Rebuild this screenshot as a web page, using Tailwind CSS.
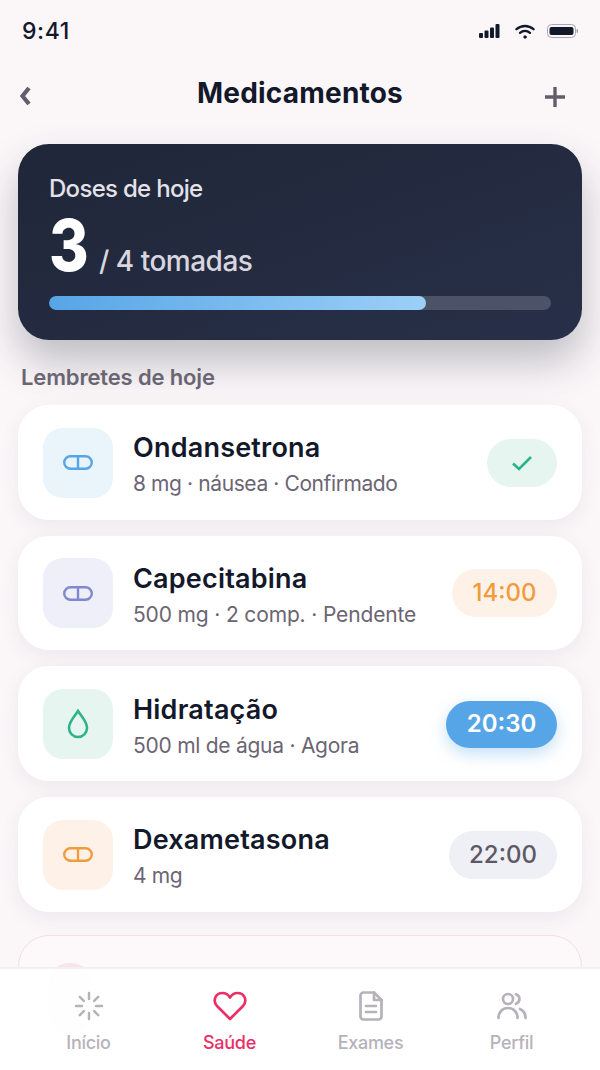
<!DOCTYPE html>
<html lang="en">
<head>
<meta charset="UTF-8">
<title>Medicamentos</title>
<script src="https://cdn.jsdelivr.net/npm/@tailwindcss/browser@4"></script>
</head>
<body class="bg-[#fbf7f9] font-['Inter',sans-serif]">
<div class="relative h-[1070px] w-[600px] overflow-hidden">
  <!-- Status bar -->
  <div class="flex h-[62px] items-center justify-between px-[22px]">
    <span class="text-[23px] font-medium leading-none text-[#14182b] tracking-[0.6px]">9:41</span>
    <div class="flex items-center">
      <svg width="21" height="14" viewBox="0 0 21 14" fill="#14182b"><rect x="0" y="9" width="4" height="5" rx="1"/><rect x="5.5" y="6.5" width="4" height="7.5" rx="1"/><rect x="11" y="3.5" width="4" height="10.5" rx="1"/><rect x="16.5" y="0" width="4" height="14" rx="1"/></svg>
      <svg class="ml-[15px]" width="20" height="15" viewBox="0 0 20 15" fill="none" stroke="#14182b" stroke-width="2.4" stroke-linecap="round"><path d="M1.5 5.2C6.4 .9 13.6 .9 18.5 5.2"/><path d="M5 8.8c3-2.5 7-2.5 10 0"/><circle cx="10" cy="13" r="1.2" fill="#14182b" stroke-width="1"/></svg>
      <svg class="ml-[12px]" width="31" height="14" viewBox="0 0 31 14" fill="none"><rect x="0.5" y="0.5" width="28" height="13" rx="4" stroke="#a9a8b0"/><rect x="2.500" y="3" width="24" height="8" rx="2" fill="#14182b"/><rect x="29.500" y="5" width="1.500" height="4" rx="0.7" fill="#a9a8b0"/></svg>
    </div>
  </div>

  <!-- Header -->
  <header class="grid h-[62px] grid-cols-[1fr_auto_1fr] items-center px-[19px]">
    <svg class="mt-[6px]" width="12" height="20" viewBox="0 0 12 20" fill="none" stroke="#625d6c" stroke-width="4.200" stroke-linejoin="miter"><path d="M10 2 3.500 10l6.500 8"/></svg>
    <h1 class="text-[28px] font-bold leading-none text-[#14182b] tracking-[0.2px] -mt-[1px]">Medicamentos</h1>
    <svg class="mr-[15px] mt-[8px] justify-self-end" width="22" height="22" viewBox="0 0 22 22" fill="none" stroke="#625d6c" stroke-width="3.4"><path d="M11 1v20M1 11h20"/></svg>
  </header>

  <main class="px-[18px] pt-[20px]">
    <!-- Summary card -->
    <section class="h-[196px] rounded-[31px] bg-gradient-to-br from-[#1f2638] to-[#283049] px-[31px] pt-[31px] shadow-[0_22px_42px_rgba(32,38,56,0.28)]">
      <p class="text-[24px] font-medium leading-[28px] tracking-[-0.7px] text-[#e4e1e8]">Doses de hoje</p>
      <div class="mt-[11px] flex h-[62px] items-end">
        <span class="w-[39px] origin-left scale-x-[0.84] text-[72px] font-extrabold leading-[62px] text-white">3</span>
        <span class="mb-[-3px] ml-[11px] text-[28px] font-medium leading-[36px] tracking-[-0.5px] text-[#d9d6df]">/ 4 tomadas</span>
      </div>
      <div class="mt-[20px] h-[14px] overflow-hidden rounded-full bg-[#4c5268]">
        <div class="h-full w-[75%] rounded-full bg-gradient-to-r from-[#56a5e6] to-[#9bd0f7]"></div>
      </div>
    </section>

    <h2 class="mb-[14px] mt-[23px] pl-[3px] text-[22px] font-semibold leading-[28px] tracking-[-0.15px] text-[#6b6573]">Lembretes de hoje</h2>

    <!-- Reminders -->
    <ul class="flex flex-col gap-[16px]">
      <li class="flex h-[114.67px] items-center rounded-[31px] bg-white px-[25px] shadow-[0_6px_20px_rgba(60,40,60,0.07)]">
        <div class="mt-[1px] flex h-[70px] w-[70px] items-center justify-center rounded-[20px] bg-[#e9f4fb]">
          <svg width="30" height="15" viewBox="0 0 30 15" fill="none" stroke="#56a5e6" stroke-width="2.4"><rect x="1.2" y="1.2" width="27.6" height="12.6" rx="6.3"/><path d="M15 1.2v12.6"/></svg>
        </div>
        <div class="ml-[20px] min-w-0 flex-1 pt-[5px]">
          <p class="text-[27px] font-semibold leading-[34px] tracking-[0.2px] text-[#14182b]">Ondansetrona</p>
          <p class="mt-[5px] text-[21px] leading-[28px] tracking-[-0.4px] text-[#6b6573]">8 mg · náusea · Confirmado</p>
        </div>
        <div class="mt-[1px] flex h-[48px] w-[70px] items-center justify-center rounded-full bg-[#e6f5ef]">
          <svg width="22" height="16" viewBox="0 0 22 16" fill="none" stroke="#2bb48c" stroke-width="2.6"><path d="M2 8.5 8 14 20 2"/></svg>
        </div>
      </li>

      <li class="flex h-[114.67px] items-center rounded-[31px] bg-white px-[25px] shadow-[0_6px_20px_rgba(60,40,60,0.07)]">
        <div class="mt-[1px] flex h-[70px] w-[70px] items-center justify-center rounded-[20px] bg-[#eeeff8]">
          <svg width="30" height="15" viewBox="0 0 30 15" fill="none" stroke="#8088cf" stroke-width="2.4"><rect x="1.2" y="1.2" width="27.6" height="12.6" rx="6.3"/><path d="M15 1.2v12.6"/></svg>
        </div>
        <div class="ml-[20px] min-w-0 flex-1 pt-[5px]">
          <p class="text-[27px] font-semibold leading-[34px] tracking-[0.2px] text-[#14182b]">Capecitabina</p>
          <p class="mt-[5px] text-[21px] leading-[28px] tracking-[-0.15px] text-[#6b6573]">500 mg · 2 comp. · Pendente</p>
        </div>
        <div class="mt-[1px] flex h-[48px] w-[105px] items-center justify-center rounded-full bg-[#fef2e8] text-[24px] font-medium text-[#f09c3c]">14:00</div>
      </li>

      <li class="flex h-[114.67px] items-center rounded-[31px] bg-white px-[25px] shadow-[0_6px_20px_rgba(60,40,60,0.07)]">
        <div class="mt-[1px] flex h-[70px] w-[70px] items-center justify-center rounded-[20px] bg-[#e6f5ef]">
          <svg width="22" height="30" viewBox="0 0 22 30" fill="none" stroke="#2bb48c" stroke-width="2.6"><path d="M11 2C8 7 2 12.500 2 19a9 9 0 0 0 18 0C20 12.500 14 7 11 2Z"/></svg>
        </div>
        <div class="ml-[20px] min-w-0 flex-1 pt-[5px]">
          <p class="text-[27px] font-semibold leading-[34px] tracking-[0.2px] text-[#14182b]">Hidratação</p>
          <p class="mt-[5px] text-[21px] leading-[28px] tracking-[-0.26px] text-[#6b6573]">500 ml de água · Agora</p>
        </div>
        <div class="mt-[1px] flex h-[47px] w-[111px] items-center justify-center rounded-full bg-[#56a5e6] text-[24px] font-semibold text-white shadow-[0_6px_16px_rgba(86,165,230,0.35)]">20:30</div>
      </li>

      <li class="flex h-[114.67px] items-center rounded-[31px] bg-white px-[25px] shadow-[0_6px_20px_rgba(60,40,60,0.07)]">
        <div class="mt-[1px] flex h-[70px] w-[70px] items-center justify-center rounded-[20px] bg-[#fef2e8]">
          <svg width="30" height="15" viewBox="0 0 30 15" fill="none" stroke="#f09c3c" stroke-width="2.4"><rect x="1.2" y="1.2" width="27.6" height="12.6" rx="6.3"/><path d="M15 1.2v12.6"/></svg>
        </div>
        <div class="ml-[20px] min-w-0 flex-1 pt-[5px]">
          <p class="text-[27px] font-semibold leading-[34px] tracking-[0.2px] text-[#14182b]">Dexametasona</p>
          <p class="mt-[5px] text-[21px] leading-[28px] tracking-[-0.4px] text-[#6b6573]">4 mg</p>
        </div>
        <div class="mt-[1px] flex h-[48px] w-[108px] items-center justify-center rounded-full bg-[#eef0f5] text-[24px] font-medium text-[#5e5866]">22:00</div>
      </li>

      <!-- Missed dose, mostly under the tab bar -->
      <li class="mt-[7px] h-[115px] rounded-[31px] border border-[#f2dfe6] bg-[#fdf9fb] pl-[30px] pt-[27px]">
        <div class="h-[70px] w-[42px] rounded-[20px] bg-[#fae3e9]"></div>
      </li>
    </ul>
  </main>

  <!-- Tab bar -->
  <nav class="absolute inset-x-0 bottom-0 grid h-[103px] grid-cols-4 border-t-2 border-[#f4eff2] bg-white/95 px-[18px] text-[18px] font-medium tracking-[-0.3px] text-[#b6b2ba]">
    <a class="flex flex-col items-center pt-[22px]">
      <svg width="30" height="30" viewBox="0 0 30 30" fill="none" stroke="#b6b2ba" stroke-width="2.5" stroke-linecap="round"><path d="M15 2v6M15 22v6M2 15h6M22 15h6M5.800 5.800l4 4M20.200 20.200l4 4M24.200 5.800l-4 4M9.800 20.200l-4 4"/></svg>
      <span class="mt-[10px] leading-[24px]">Início</span>
    </a>
    <a class="flex flex-col items-center pt-[22px] text-[#ea2f66]">
      <svg width="34" height="30" viewBox="0 0 34 30" fill="none" stroke="#ea2f66" stroke-width="2.700" stroke-linejoin="round"><path d="M17 28 4 15C-1 9 3 2 9.500 2c3.500 0 6 2 7.500 4.500C18.500 4 21 2 24.500 2 31 2 35 9 30 15Z"/></svg>
      <span class="mt-[10px] leading-[24px]">Saúde</span>
    </a>
    <a class="flex flex-col items-center pt-[22px]">
      <svg width="24" height="30" viewBox="0 0 24 30" fill="none" stroke="#b6b2ba" stroke-width="2.700" stroke-linejoin="round" stroke-linecap="round"><path d="M15 1.500H4.500a3 3 0 0 0-3 3v21a3 3 0 0 0 3 3h15a3 3 0 0 0 3-3V9Z"/><path d="M15 1.500V9h7.500M7 15h10M7 21h10"/></svg>
      <span class="mt-[10px] leading-[24px]">Exames</span>
    </a>
    <a class="flex flex-col items-center pt-[22px]">
      <svg width="30" height="30" viewBox="0 0 30 30" fill="none" stroke="#b6b2ba" stroke-width="2.700" stroke-linecap="round"><circle cx="11" cy="8" r="5"/><path d="M1.500 27c0-6 4-10 9.500-10s9.500 4 9.500 10"/><path d="M19 3.300a5 5 0 0 1 0 9.500M23 18c3.500 1.500 5.500 5 5.500 9"/></svg>
      <span class="mt-[10px] leading-[24px]">Perfil</span>
    </a>
  </nav>
</div>
</body>
</html>
